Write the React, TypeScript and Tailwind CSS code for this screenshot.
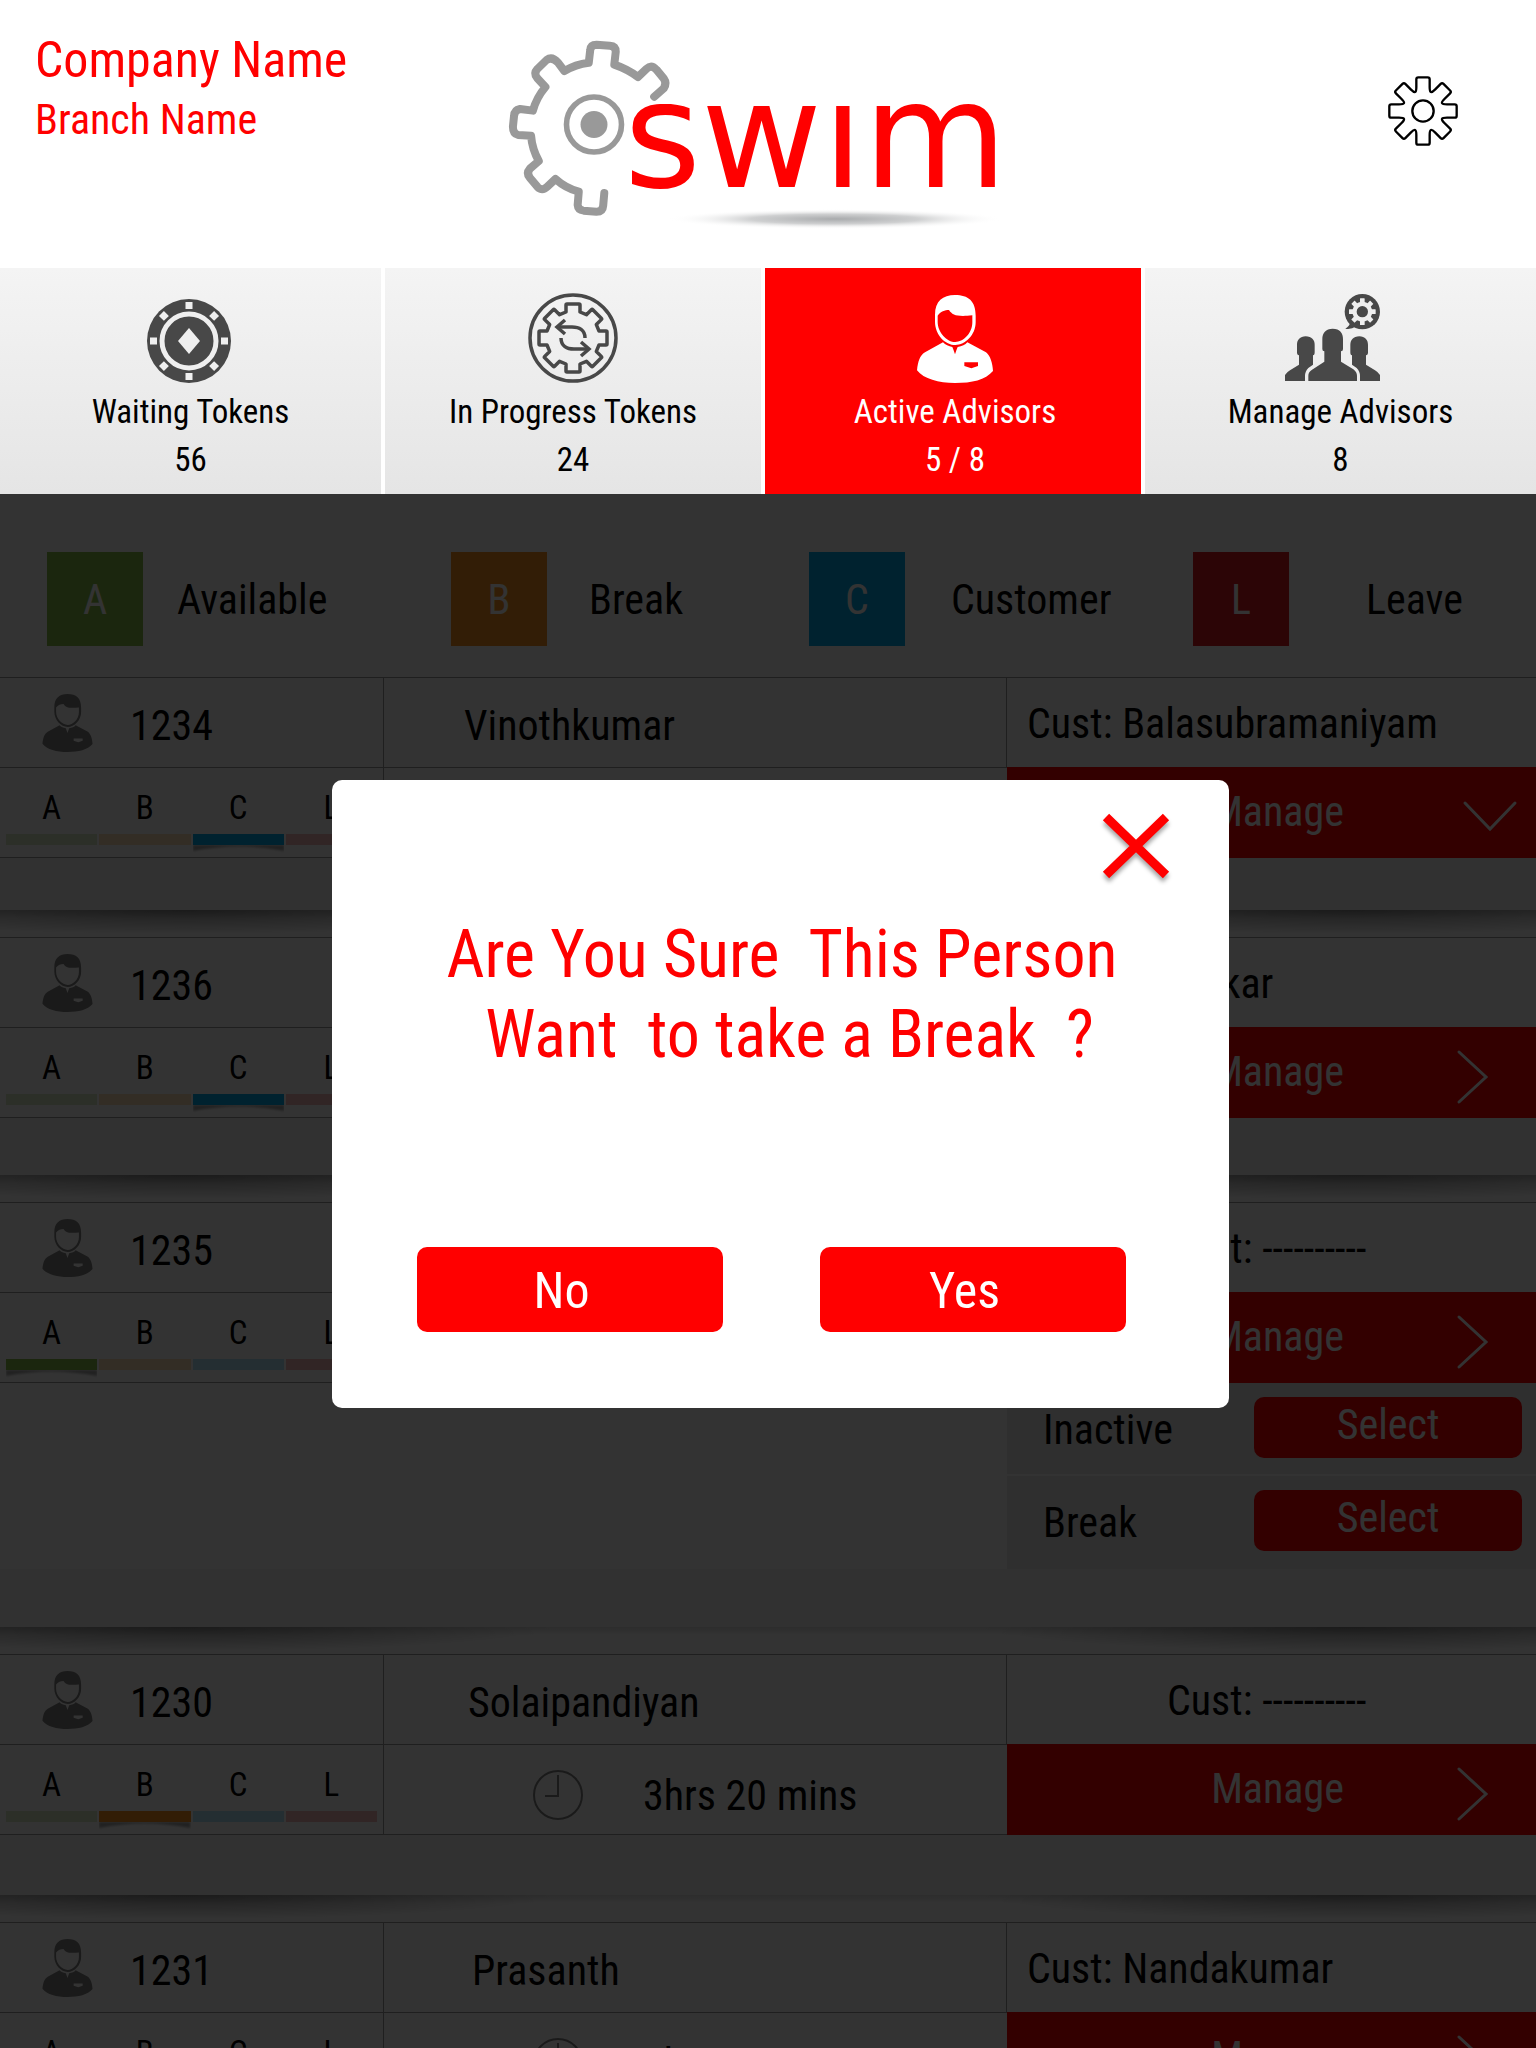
import type { ReactNode } from "react";

type StatusKey = "A" | "B" | "C" | "L";

type Advisor = {
  id: string;
  name?: string;
  namePad?: string;
  time?: string;
  customer: string;
  customerPad: string;
  status: StatusKey;
  open?: boolean;
  actions?: string[];
  footer: string;
};

const STATUS_COLORS: Record<StatusKey, string> = {
  A: "bg-[#87be46]",
  B: "bg-[#f7931e]",
  C: "bg-[#00a8e8]",
  L: "bg-[#d9191f]",
};

const STATUS_KEYS: StatusKey[] = ["A", "B", "C", "L"];

const LEGEND: { key: StatusKey; label: string; gap: string }[] = [
  { key: "A", label: "Available", gap: "ml-[34px]" },
  { key: "B", label: "Break", gap: "ml-[42px]" },
  { key: "C", label: "Customer", gap: "ml-[46px]" },
  { key: "L", label: "Leave", gap: "ml-[77px]" },
];

const ADVISORS: Advisor[] = [
  { id: "1234", name: "Vinothkumar", namePad: "pl-20", customer: "Balasubramaniyam", customerPad: "pl-5", status: "C", open: true, footer: "h-[52px]" },
  { id: "1236", customer: "Sudhakar", customerPad: "pl-4", status: "C", footer: "h-[57px]" },
  { id: "1235", customer: "----------", customerPad: "pl-40", status: "A", actions: ["Inactive", "Break"], footer: "h-[58px]" },
  { id: "1230", name: "Solaipandiyan", namePad: "pl-[84px]", time: "3hrs 20 mins", customer: "----------", customerPad: "pl-40", status: "B", footer: "h-[60px]" },
  { id: "1231", name: "Prasanth", namePad: "pl-[88px]", time: "3hrs 20 mins", customer: "Nandakumar", customerPad: "pl-5", status: "A", footer: "h-[60px]" },
];

function rotate(x: number, y: number, deg: number) {
  const a = (deg * Math.PI) / 180;
  return `${(x * Math.cos(a) - y * Math.sin(a)).toFixed(2)} ${(x * Math.sin(a) + y * Math.cos(a)).toFixed(2)}`;
}

/** Eight-tooth gear centred on the origin; `dip` pulls the valleys towards the centre. */
function gearPath(half: number, base: number, top: number, corner: number, dip: number) {
  let d = "";
  for (let i = 0; i < 8; i++) {
    const a = i * 45;
    d += `${i === 0 ? "M" : "L"}${rotate(-half, -base, a)}`;
    d += `L${rotate(-half, -(top - corner), a)}Q${rotate(-half, -top, a)} ${rotate(-half + corner, -top, a)}`;
    d += `L${rotate(half - corner, -top, a)}Q${rotate(half, -top, a)} ${rotate(half, -(top - corner), a)}`;
    d += `L${rotate(half, -base, a)}`;
    d += `C${rotate(half, -(base - dip), a)} ${rotate(-half, -(base - dip), a + 45)} ${rotate(-half, -base, a + 45)}`;
  }
  return d + "Z";
}

function SwimLogo() {
  return (
    <svg viewBox="-2 0 580 230" className="mt-5 w-full" role="img" aria-label="swim">
      <defs>
        <radialGradient id="logo-shadow">
          <stop offset="0" stopColor="#a9abad" />
          <stop offset="0.5" stopColor="#cfd0d1" />
          <stop offset="1" stopColor="#ffffff" stopOpacity="0" />
        </radialGradient>
        <clipPath id="wordmark">
          <rect x="140" y="84" width="440" height="100" />
        </clipPath>
      </defs>
      <g transform="scale(0.3699 0.3333)" fill="none" stroke="#999999" strokeLinecap="round" strokeLinejoin="round">
        <path
          vectorEffect="non-scaling-stroke"
          strokeWidth="8"
          d="M471 230L497 205Q506 190 497 176L477 149Q463 133 450 147L427 171Q398 147 363 134L367 95Q367 78 351 77L315 74Q299 74 298 90L294 128Q258 133 228 153L211 128Q195 108 180 120L155 147Q144 160 155 175L177 201Q153 232 143 272L108 267Q93 270 92 288L89 320Q89 341 103 345L138 347Q141 388 159 423L135 446Q124 460 135 474L155 500Q168 515 182 500L204 477Q232 505 267 515L264 555Q265 570 280 572L315 575Q332 575 333 557L336 519"
        />
      </g>
      <circle cx="114" cy="104.500" r="27.500" fill="none" stroke="#999999" strokeWidth="5.600" />
      <circle cx="114" cy="104.500" r="13.500" fill="#999999" />
      <ellipse cx="355" cy="199" rx="168" ry="10" fill="url(#logo-shadow)" />
      <text x="144" y="167" clipPath="url(#wordmark)" fill="#ff0000" fontSize="148" fontFamily='"DejaVu Sans", sans-serif'>
        swim
      </text>
    </svg>
  );
}

function SettingsIcon() {
  return (
    <svg viewBox="-105 -105 210 210" className="size-[70px]" fill="none" stroke="#000" strokeWidth="7" aria-hidden="true">
      <path d={gearPath(20, 72, 101, 6, 18)} strokeLinejoin="round" />
      <circle r="32" />
    </svg>
  );
}

function ChipIcon() {
  return (
    <svg viewBox="-42 -42 84 84" className="mr-1 size-[84px]" aria-hidden="true">
      <circle r="42" fill="#484848" />
      <circle r="27" fill="none" stroke="#efefef" strokeWidth="5" />
      <path d="M0 -13L11 0L0 13L-11 0Z" fill="#efefef" />
      {[0, 45, 90, 135, 180, 225, 270, 315].map((a) => (
        <rect key={a} x="-3.500" y="-39" width="7" height="7" fill="#efefef" transform={`rotate(${a})`} />
      ))}
    </svg>
  );
}

function ProgressIcon() {
  return (
    <svg viewBox="-45 -45 90 90" className="size-[90px]" fill="none" stroke="#484848" strokeWidth="3.500" aria-hidden="true">
      <circle r="43" />
      <path d={gearPath(7, 26, 34, 1, 0)} strokeLinejoin="round" />
      <path d="M12 0C12 -8 6 -11 -1 -11H-16" />
      <path d="M-8 -18L-16 -11L-8 -4" />
      <path d="M-12 0C-12 8 -6 11 1 11H16" />
      <path d="M8 18L16 11L8 4" />
    </svg>
  );
}

function PersonIcon({ className }: { className: string }) {
  return (
    <svg viewBox="0 0 228 264" className={className} fill="currentColor" fillRule="evenodd" aria-hidden="true">
      <path d="M54 60C54 18 77 0 114 0C154 0 176 18 176 62V82C176 120 145 150 115 150C85 150 54 120 54 80ZM62 62C70 49 84 45 96 45C106 61 122 66 166 61V82C166 116 138 141 115 141C90 141 62 113 62 80Z" />
      <path d="M78 142C85 150 95 153 106 156Q110 165 114 178Q118 165 122 156C135 153 145 150 151 142L207 172C220 182 227 205 228 228C205 255 165 264 114 264C65 264 20 252 0 226C3 200 8 182 24 172ZM142 202H183V213L163 220L142 213Z" />
    </svg>
  );
}

function TeamIcon() {
  const side =
    "M62 127C80 127 89 138 89 152V175Q89 184 84 184V212L70 222Q60 232 60 246V261H0V243Q5 235 15 229L42 212V184Q36 184 36 175V152C36 138 45 127 62 127Z";
  return (
    <svg viewBox="0 0 285 261" className="mr-4 mb-0.5 w-[95px]" fill="#484848" aria-hidden="true">
      <path d="M143 104C165 104 174 118 174 135V165Q174 172 168 172V203L205 226Q216 235 216 245V261H70V245Q70 235 80 228L118 203V172Q112 172 112 165V135C112 118 122 104 143 104Z" />
      <path d={side} />
      <path d={side} transform="translate(285 0) scale(-1 1)" />
      <circle cx="232" cy="53" r="53" />
      <path d="M196 84Q194 97 181 104Q198 107 214 97Z" />
      <g transform="translate(232 53)">
        <path d={gearPath(7, 29, 40, 1, 0)} fill="#efefef" />
        <circle r="17" />
      </g>
    </svg>
  );
}

function ClockIcon() {
  return (
    <svg viewBox="-25 -25 50 50" className="size-[50px] text-[#828282]" fill="none" stroke="currentColor" strokeWidth="2" aria-hidden="true">
      <circle r="24" />
      <path d="M0 -20V1H-13" />
    </svg>
  );
}

function ChevronIcon({ open }: { open?: boolean }) {
  return (
    <svg
      viewBox="0 0 56 56"
      className="absolute top-[22px] right-[18px] size-14 overflow-visible"
      fill="none"
      stroke="#fff"
      strokeWidth="3"
      strokeLinecap="round"
      aria-hidden="true"
    >
      {open ? <path d="M3 14L28 40L53 14" /> : <path d="M-3 3L24 28L-3 53" />}
    </svg>
  );
}

function Tab({ icon, label, value, active }: { icon: ReactNode; label: string; value: string; active?: boolean }) {
  return (
    <button
      type="button"
      className={`flex h-[226px] flex-col items-center text-[33px] leading-[48px] ${
        active ? "bg-[#ff0000] pl-1 text-white" : "bg-linear-to-b from-[#f4f4f4] to-[#e5e5e5] text-black"
      }`}
    >
      <span className="mb-[5px] flex h-[115px] items-end">{icon}</span>
      <span>{label}</span>
      <span>{value}</span>
    </button>
  );
}

function StatusPicker({ current }: { current: StatusKey }) {
  return (
    <div className="grid grid-cols-4 gap-[2px] px-1.5 pt-4">
      {STATUS_KEYS.map((key) => (
        <button key={key} type="button" aria-pressed={key === current} className="relative flex flex-col text-[33px] leading-[48px]">
          <span className="w-full text-center">{key}</span>
          <span className={`mt-[2px] h-[11px] w-full ${STATUS_COLORS[key]} ${key === current ? "" : "opacity-30"}`} />
          {key === current && (
            <svg viewBox="0 0 91 8" preserveAspectRatio="none" className="absolute top-full left-0 h-2 w-full" aria-hidden="true">
              <path d="M0 0H91V6Q45 -3 0 6Z" fill="#000" opacity="0.35" className="blur-[1px]" />
            </svg>
          )}
        </button>
      ))}
    </div>
  );
}

function AdvisorCard({ advisor }: { advisor: Advisor }) {
  const columns = "grid grid-cols-[384fr_623fr_529fr] h-[90px] border-t border-[#999999]";
  return (
    <article>
      <div className={columns}>
        <div className="flex items-center border-r border-[#999999] pl-[41px]">
          <PersonIcon className="h-[58px] w-[53px] text-[#828282]" />
          <span className="pt-1.5 pl-9">{advisor.id}</span>
        </div>
        <div className={`flex items-center border-r border-[#999999] pt-1.5 ${advisor.namePad ?? ""}`}>{advisor.name}</div>
        <div className={`flex items-center pt-0.5 whitespace-nowrap ${advisor.customerPad}`}>Cust: {advisor.customer}</div>
      </div>
      <div className={columns}>
        <div className="border-r border-[#999999]">
          <StatusPicker current={advisor.status} />
        </div>
        <div className="flex items-center pt-2.5 pl-[149px]">
          {advisor.time && (
            <>
              <ClockIcon />
              <span className="pl-[60px]">{advisor.time}</span>
            </>
          )}
        </div>
        <button type="button" aria-expanded={advisor.open ?? false} className="relative -mt-px h-[91px] bg-[#ff0000] pb-0.5 pl-3 text-white">
          Manage
          <ChevronIcon open={advisor.open} />
        </button>
      </div>
      <div className="border-t border-[#999999]" />
      {advisor.actions && (
        <div className="grid grid-cols-[1007fr_529fr]">
          <ul className="col-start-2 divide-y-2 divide-white">
            {advisor.actions.map((action) => (
              <li key={action} className="flex h-[93px] items-start justify-between bg-[#e9e9e9] pt-3.5 pr-3.5 pl-9">
                <span className="leading-[66px]">{action}</span>
                <button type="button" className="h-[61px] w-[268px] rounded-[10px] bg-[#ff0000] pb-1.5 leading-none text-white">
                  Select
                </button>
              </li>
            ))}
          </ul>
        </div>
      )}
      <div className={`bg-[#f2f2f2] ${advisor.footer}`} />
      <div className="h-[27px] bg-[radial-gradient(ellipse_24%_90%_at_12%_0%,#0006,#0000),radial-gradient(ellipse_24%_90%_at_88%_0%,#0006,#0000),linear-gradient(#0002,#0000_30%)]" />
    </article>
  );
}

function ConfirmDialog() {
  const action = "h-[85px] w-[306px] rounded-[10px] bg-[#ff0000] pt-1 pr-4 text-[50px] text-white";
  return (
    <div className="absolute inset-0 flex items-start justify-center bg-black/80 pt-[286px] pl-6">
      <div role="dialog" aria-modal="true" aria-labelledby="confirm-title" className="flex w-[897px] max-w-full flex-col items-center rounded-[10px] bg-white pb-[76px] text-[#ff0000]">
        <button type="button" aria-label="Close" className="mt-8 mr-[59px] self-end">
          <svg viewBox="0 0 68 68" className="size-[68px] overflow-visible drop-shadow-[0_4px_2px_rgba(0,0,0,0.35)]" fill="none" stroke="currentColor" strokeWidth="9" aria-hidden="true">
            <path d="M4 5L64 63M64 5L4 63" />
          </svg>
        </button>
        <h2 id="confirm-title" className="mt-[35px] pl-1 text-center text-[66px] leading-[80px] whitespace-pre">
          {"Are You Sure  This Person\n Want  to take a Break  ?"}
        </h2>
        <div className="mt-[172px] flex gap-[97px] pr-[18px]">
          <button type="button" className={action}>
            No
          </button>
          <button type="button" className={action}>
            Yes
          </button>
        </div>
      </div>
    </div>
  );
}

export default function App() {
  return (
    <div className='flex h-screen flex-col overflow-hidden bg-white font-["Roboto_Condensed",Roboto,sans-serif] text-[42px] text-black'>
      <header className="grid h-[268px] shrink-0 grid-cols-[1fr_580px_1fr] items-start">
        <div className="pt-[30px] pl-[35px] leading-[60px] text-[#ff0000]">
          <h1 className="text-[50px]">Company Name</h1>
          <p>Branch Name</p>
        </div>
        <SwimLogo />
        <button type="button" aria-label="Settings" className="mt-[76px] mr-[78px] justify-self-end">
          <SettingsIcon />
        </button>
      </header>

      <nav className="grid shrink-0 grid-cols-[381fr_376fr_376fr_391fr] gap-1">
        <Tab icon={<ChipIcon />} label="Waiting Tokens" value="56" />
        <Tab icon={<ProgressIcon />} label="In Progress Tokens" value="24" />
        <Tab icon={<PersonIcon className="h-[88px] w-[76px]" />} label="Active Advisors" value="5 / 8" active />
        <Tab icon={<TeamIcon />} label="Manage Advisors" value="8" />
      </nav>

      <main className="relative min-h-0 flex-1 overflow-hidden">
        <ul className="grid grid-cols-[404fr_358fr_384fr_343fr] pt-[58px] pb-[31px] pl-[47px]">
          {LEGEND.map((item) => (
            <li key={item.key} className="flex items-center">
              <span className={`flex h-[94px] w-24 items-center justify-center text-white ${STATUS_COLORS[item.key]}`}>{item.key}</span>
              <span className={item.gap}>{item.label}</span>
            </li>
          ))}
        </ul>
        {ADVISORS.map((advisor) => (
          <AdvisorCard key={advisor.id} advisor={advisor} />
        ))}
        <ConfirmDialog />
      </main>
    </div>
  );
}
